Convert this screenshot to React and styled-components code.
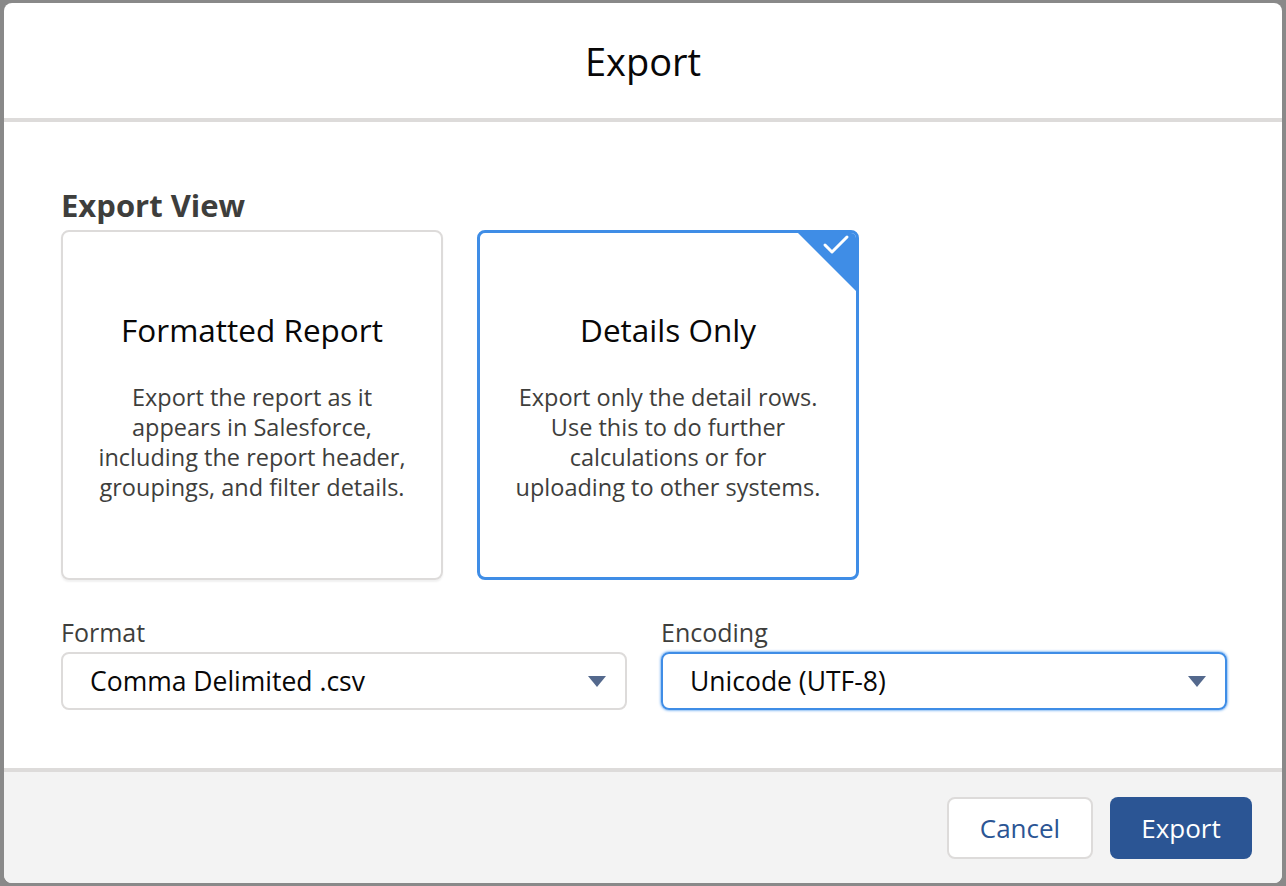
import styled, { createGlobalStyle } from "styled-components";
import { useState } from "react";

const GlobalStyle = createGlobalStyle`
  html, body {
    margin: 0;
    padding: 0;
    background: #898989;
  }
  body {
    font-family: "Open Sans", "Noto Sans", sans-serif;
  }
`;

const Backdrop = styled.div`
  width: 1286px;
  height: 886px;
  padding: 3px 4px;
  box-sizing: border-box;
`;

const Modal = styled.div`
  width: 1278px;
  height: 880px;
  background: #fff;
  border-radius: 8px;
  overflow: hidden;
  display: flex;
  flex-direction: column;
`;

const Header = styled.div`
  height: 115px;
  border-bottom: 4px solid #dddbda;
  display: flex;
  align-items: center;
  justify-content: center;
  flex-shrink: 0;
`;

const Title = styled.h2`
  margin: 0;
  font-size: 38px;
  font-weight: 400;
  color: #080707;
`;

const Body = styled.div`
  flex: 1;
  padding: 63px 55px 0 57px;
`;

const SectionTitle = styled.h3`
  margin: 0 0 5px;
  font-size: 31px;
  line-height: 40px;
  font-weight: 700;
  color: #3e3e3c;
`;

const CardRow = styled.div`
  display: grid;
  grid-template-columns: 382px 382px;
  gap: 34px;
`;

const Card = styled.div`
  position: relative;
  height: 350px;
  box-sizing: border-box;
  border: ${(p) => (p.$selected ? "3px solid #3f8de6" : "2px solid #dddbda")};
  border-radius: 8px;
  overflow: hidden;
  box-shadow: ${(p) => (p.$selected ? "none" : "0 2px 2px rgba(0,0,0,0.06)")};
  padding-top: ${(p) => (p.$selected ? "79px" : "80px")};
  text-align: center;
  cursor: pointer;
`;

const Corner = styled.div`
  position: absolute;
  top: 0;
  right: 0;
  width: 0;
  height: 0;
  border-top: 58px solid #3f8de6;
  border-left: 58px solid transparent;
`;

const Check = styled.svg`
  position: absolute;
  top: 1px;
  right: 6px;
  width: 28px;
  height: 22px;
`;

const CardTitle = styled.div`
  font-size: 31.5px;
  line-height: 36px;
  color: #080707;
  margin-bottom: 34px;
`;

const CardText = styled.p`
  margin: 0;
  font-size: 23.5px;
  line-height: 30px;
  color: #3e3e3c;
  padding: 0 10px;
  white-space: nowrap;
`;

const FieldRow = styled.div`
  display: grid;
  grid-template-columns: 566px 566px;
  gap: 34px;
  margin-top: 37px;
`;

const Field = styled.div`
  display: flex;
  flex-direction: column;
`;

const Label = styled.label`
  font-size: 25px;
  line-height: 30px;
  color: #3e3e3c;
  margin-bottom: 5px;
`;

const Select = styled.div`
  height: 58px;
  box-sizing: border-box;
  border: 2px solid ${(p) => (p.$focused ? "#3f8de6" : "#dddbda")};
  box-shadow: ${(p) => (p.$focused ? "0 0 3px #1b7ce8" : "none")};
  border-radius: 8px;
  display: flex;
  align-items: center;
  justify-content: space-between;
  padding: 0 19px 0 27px;
  font-size: 26.5px;
  color: #080707;
`;

const Arrow = styled.span`
  width: 0;
  height: 0;
  border-left: 9px solid transparent;
  border-right: 9px solid transparent;
  border-top: 11px solid #54698d;
`;

const Footer = styled.div`
  height: 111px;
  border-top: 4px solid #dddbda;
  background: #f3f3f3;
  display: flex;
  align-items: center;
  justify-content: flex-end;
  gap: 17px;
  padding-right: 30px;
  flex-shrink: 0;
`;

const Button = styled.button`
  height: 62px;
  box-sizing: border-box;
  border-radius: 8px;
  font-family: inherit;
  font-size: 26px;
  padding: 0;
  width: ${(p) => (p.$brand ? "142px" : "146px")};
  border: ${(p) => (p.$brand ? "none" : "2px solid #dddbda")};
  background: ${(p) => (p.$brand ? "#2b5594" : "#fff")};
  color: ${(p) => (p.$brand ? "#fff" : "#2b5594")};
  cursor: pointer;
`;

const views = [
  {
    id: "formatted",
    title: "Formatted Report",
    lines: [
      "Export the report as it",
      "appears in Salesforce,",
      "including the report header,",
      "groupings, and filter details.",
    ],
  },
  {
    id: "details",
    title: "Details Only",
    lines: [
      "Export only the detail rows.",
      "Use this to do further",
      "calculations or for",
      "uploading to other systems.",
    ],
  },
];

export default function App() {
  const [view, setView] = useState("details");

  return (
    <>
      <GlobalStyle />
      <Backdrop>
        <Modal>
          <Header>
            <Title>Export</Title>
          </Header>
          <Body>
            <SectionTitle>Export View</SectionTitle>
            <CardRow>
              {views.map((v) => (
                <Card
                  key={v.id}
                  $selected={view === v.id}
                  onClick={() => setView(v.id)}
                >
                  {view === v.id && (
                    <>
                      <Corner />
                      <Check viewBox="0 0 28 22">
                        <path
                          d="M3 11 L10 18 L25 3"
                          fill="none"
                          stroke="#fff"
                          strokeWidth="3"
                          strokeLinecap="round"
                          strokeLinejoin="round"
                        />
                      </Check>
                    </>
                  )}
                  <CardTitle>{v.title}</CardTitle>
                  {v.lines.map((l) => (
                    <CardText key={l}>{l}</CardText>
                  ))}
                </Card>
              ))}
            </CardRow>
            <FieldRow>
              <Field>
                <Label>Format</Label>
                <Select>
                  Comma Delimited .csv
                  <Arrow />
                </Select>
              </Field>
              <Field>
                <Label>Encoding</Label>
                <Select $focused>
                  Unicode (UTF-8)
                  <Arrow />
                </Select>
              </Field>
            </FieldRow>
          </Body>
          <Footer>
            <Button>Cancel</Button>
            <Button $brand>Export</Button>
          </Footer>
        </Modal>
      </Backdrop>
    </>
  );
}
